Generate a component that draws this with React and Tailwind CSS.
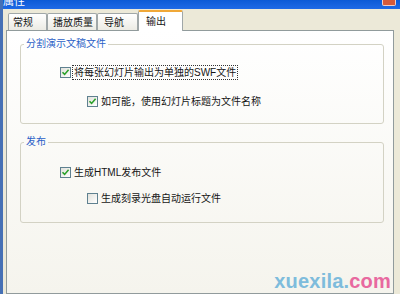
import React from 'react';

const font = { fontFamily: '"Liberation Sans", "Noto Sans CJK SC", sans-serif' };

function Check({ checked }) {
    return (
        <span className="w-[11px] h-[11px] shrink-0 border border-[#5f8190] bg-gradient-to-br from-[#e2e2dc] to-white flex items-center justify-center">
            {checked && (
                <svg width="9" height="9" viewBox="0 0 9 9">
                    <polyline points="1.5,4.2 3.6,6.4 7.6,1.8" fill="none" stroke="#2aa12a" strokeWidth="1.6" />
                </svg>
            )}
        </span>
    );
}

function Row({ checked, label, indent, focus }) {
    return (
        <div className={`flex items-center h-[14px] ${indent}`}>
            <Check checked={checked} />
            <span className={`ml-[1px] px-[1px] leading-[13px] ${focus ? 'border border-dotted border-[#333]' : 'border border-transparent'}`}>
                {label}
            </span>
        </div>
    );
}

function Group({ title, children, className }) {
    return (
        <fieldset className={`w-[364px] border border-[#d3d2c4] rounded-[3px] ${className}`}>
            <legend className="ml-[3px] px-[2px] text-[#2b5fc7] leading-[12px]">{title}</legend>
            {children}
        </fieldset>
    );
}

const tabs = [
    { label: '常规', w: 'w-[39px] pl-[4px]' },
    { label: '播放质量', w: 'w-[50px] pl-[5px]' },
    { label: '导航', w: 'w-[41px] pl-[6px]' },
];

export default function App() {
    return (
        <div className="w-[400px] h-[294px] overflow-hidden relative bg-[#ece9d8] flex flex-col border-l-[3px] border-[#4670b5] text-[10px] text-[#161616]" style={font}>
            <div className="h-[9px] -ml-[3px] bg-gradient-to-b from-[#0b5ad6] to-[#1e6ae6] flex justify-between overflow-hidden">
                <span className="text-white text-[11px] leading-[10px] -mt-[4px] pl-[3px]">属性</span>
                <span className="w-[14px] h-[6px] mr-[4px] bg-[#d65a3a] rounded-b-[2px] border border-t-0 border-white/70" />
            </div>
            <div className="h-[21px] flex items-end pl-[5px]">
                {tabs.map((t) => (
                    <div key={t.label} className={`h-[17px] ${t.w} flex items-center border border-b-0 border-[#a0a7a8] rounded-t-[2px] bg-gradient-to-b from-white to-[#ecebe4]`}>
                        {t.label}
                    </div>
                ))}
                <div className="h-[21px] w-[45px] pl-[7px] flex items-center -mb-[1px] relative z-10 bg-white border border-b-0 border-[#a0a7a8] border-t-[2px] border-t-[#f0a838] rounded-t-[2px]">
                    输出
                </div>
            </div>
            <div className="ml-[3px] w-[388px] flex-1 border border-[#919b9c] bg-gradient-to-b from-white to-[#f5f4ed] pl-[13px] pt-[7px]">
                <Group title="分割演示文稿文件" className="h-[86px]">
                    <div className="flex flex-col gap-[15px] pt-[15px]">
                        <Row checked indent="pl-[39px]" focus label="将每张幻灯片输出为单独的SWF文件" />
                        <Row checked indent="pl-[66px]" label="如可能，使用幻灯片标题为文件名称" />
                    </div>
                </Group>
                <Group title="发布" className="h-[87px] mt-[12px]">
                    <div className="flex flex-col gap-[12px] pt-[17px]">
                        <Row checked indent="pl-[39px]" label="生成HTML发布文件" />
                        <Row indent="pl-[66px]" label="生成刻录光盘自动运行文件" />
                    </div>
                </Group>
            </div>
            <div className="absolute right-[9px] bottom-[1px] text-[20px] font-bold leading-[24px] tracking-[0.2px]" style={{ fontFamily: '"Liberation Sans", sans-serif' }}>
                <span className="text-[#7ebcdc]">xuexila.</span>
                <span className="text-[#e8699f]">com</span>
            </div>
        </div>
    );
}
